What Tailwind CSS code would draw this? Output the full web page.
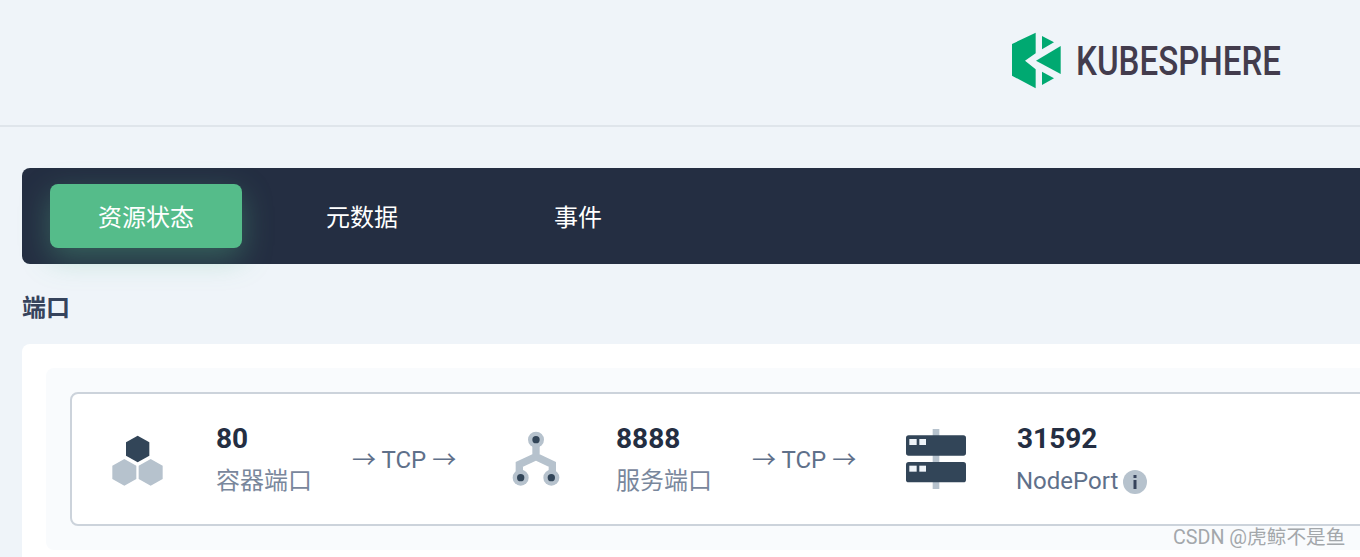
<!DOCTYPE html>
<html lang="en">
<head>
  <meta charset="UTF-8" />
  <meta name="viewport" content="width=device-width, initial-scale=1.0">
  <title>KubeSphere Service</title>
  <script src="https://cdn.jsdelivr.net/npm/@tailwindcss/browser@4"></script>
</head>
<body class="relative h-[557px] overflow-hidden bg-[#eff4f9] font-['Roboto','Noto_Sans_CJK_SC',sans-serif]">

  <!-- Header -->
  <header class="flex h-[127px] justify-end border-b-2 border-[#dfe5eb] pr-[78px] pt-[32px]">
    <div class="flex h-[60px] items-start">
      <svg class="h-[58px] w-[50px]" viewBox="66 66 150 174" aria-label="KubeSphere logo">
        <path fill="#00a971" d="M66 102 137 68V130L105 152 137 178V235L66 197Z" />
        <path fill="#00a971" d="M156 78 192 97 156 118Z" />
        <path fill="#00a971" d="M212 108V192L138 152Z" />
        <path fill="#00a971" d="M156 185 192 205 156 225Z" />
      </svg>
      <svg class="ml-[14px] mt-[12px] h-[34px] w-[206px] overflow-visible" viewBox="0 0 206 34">
        <text x="0" y="31" textLength="205" lengthAdjust="spacingAndGlyphs" fill="#433c4d" font-family="Roboto" font-weight="500" font-size="40">KUBESPHERE</text>
      </svg>
    </div>
  </header>

  <main class="pl-[22px] pt-[41px]">
    <!-- Tabs -->
    <nav class="flex h-24 w-[1400px] items-center gap-6 rounded-lg bg-[#242e42] pl-7">
      <a class="flex h-16 w-48 items-center justify-center rounded-lg bg-[#55bc8a] pt-[3px] text-2xl text-white shadow-[0_10px_30px_0_rgba(85,188,138,0.36)]">资源状态</a>
      <a class="flex h-16 w-48 items-center justify-center pt-[3px] text-2xl text-white">元数据</a>
      <a class="flex h-16 w-48 items-center justify-center pt-[3px] text-2xl text-white">事件</a>
    </nav>

    <h2 class="mt-[28px] h-[52px] text-2xl leading-[32px] font-bold text-[#36435c]">端口</h2>

    <!-- Ports card -->
    <section class="w-[1400px] rounded-lg bg-white p-6">
      <div class="h-[182px] rounded-lg bg-[#f9fbfd] p-6">
        <div class="flex h-[134px] items-center rounded-lg border-2 border-[#ccd3db] bg-white">

          <div class="flex w-[400px] items-center">
            <div class="flex w-[130px] justify-center pt-[3px]">
              <svg class="size-[60px] overflow-visible" viewBox="141 138 180 180">
                <path fill="#324558" d="M233 152 268 172V212L233 232 198 212V172Z" />
                <path fill="#b6c2cd" d="M193 222 229 242V282L193 302 157 282V242Z" />
                <path fill="#b6c2cd" d="M272 222 308 242V282L272 302 236 282V242Z" />
              </svg>
            </div>
            <div class="ml-[14px] w-[136px] pt-[2px]">
              <div class="text-[28px] leading-[40px] font-bold text-[#242e42]">80</div>
              <div class="mt-[2px] text-2xl leading-[40px] text-[#79879c]">容器端口</div>
            </div>
            <div class="pt-[2px] text-2xl text-[#5f708a]">→ TCP →</div>
          </div>

          <div class="flex w-[400px] items-center">
            <div class="flex w-[128px] justify-center pt-[3px]">
              <svg class="size-[60px] overflow-visible" viewBox="47 48 180 180">
                <path fill="none" stroke="#b6c2cd" stroke-width="22" d="M137 74V125L87 148V188M137 125 186 148V188" />
                <circle cx="137" cy="74" r="24" fill="#b6c2cd" />
                <circle cx="91" cy="188" r="24" fill="#b6c2cd" />
                <circle cx="183" cy="188" r="24" fill="#b6c2cd" />
                <circle cx="137" cy="74" r="11" fill="#324558" />
                <circle cx="91" cy="188" r="11" fill="#324558" />
                <circle cx="183" cy="188" r="11" fill="#324558" />
              </svg>
            </div>
            <div class="ml-[16px] w-[136px] pt-[2px]">
              <div class="text-[28px] leading-[40px] font-bold text-[#242e42]">8888</div>
              <div class="mt-[2px] text-2xl leading-[40px] text-[#79879c]">服务端口</div>
            </div>
            <div class="pt-[2px] text-2xl text-[#5f708a]">→ TCP →</div>
          </div>

          <div class="flex w-[400px] items-center">
            <div class="flex w-[128px] justify-center pt-[3px]">
              <svg class="size-[60px] overflow-visible" viewBox="48 48 180 180">
                <rect x="128" y="42" width="20" height="180" fill="#b6c2cd" />
                <rect x="48" y="61" width="180" height="61" rx="8" fill="#324558" />
                <rect x="48" y="141" width="180" height="61" rx="8" fill="#324558" />
                <rect x="58" y="72" width="22" height="18" fill="#eff4f9" />
                <rect x="88" y="72" width="20" height="18" fill="#eff4f9" />
                <rect x="58" y="152" width="22" height="18" fill="#eff4f9" />
                <rect x="88" y="152" width="20" height="18" fill="#eff4f9" />
              </svg>
            </div>
            <div class="ml-[17px] pt-[2px]">
              <div class="text-[28px] leading-[40px] font-bold text-[#242e42]">31592</div>
              <div class="mt-[2px] -ml-px flex items-center text-2xl leading-[40px] text-[#5f708a]">
                NodePort
                <svg class="ml-[5px] mt-[1px] size-6" viewBox="0 0 24 24">
                  <circle cx="12" cy="12" r="12" fill="#b6c2cd" />
                  <rect x="10.5" y="5" width="3" height="3" fill="#36435c" />
                  <rect x="10.5" y="10" width="3" height="9" fill="#36435c" />
                </svg>
              </div>
            </div>
          </div>

        </div>
      </div>
    </section>
  </main>

  <!-- CSDN watermark -->
  <div class="absolute left-[1173px] top-[525px] text-[19.7px] leading-[26px] whitespace-nowrap text-[#a3a7ab]">CSDN @虎鲸不是鱼</div>
</body>
</html>
